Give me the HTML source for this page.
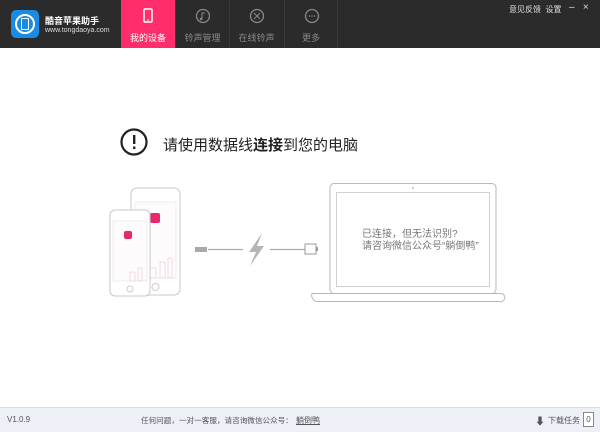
<!DOCTYPE html>
<html><head><meta charset="utf-8"><style>
*{margin:0;padding:0;box-sizing:border-box}
body{width:600px;height:432px;overflow:hidden;background:#fff;font-family:"Liberation Sans","Noto Sans CJK SC",sans-serif;position:relative}
.hdr{position:absolute;left:0;top:0;width:600px;height:48px;background:#2b2b2b}
.tab{position:absolute;top:0;height:48px;width:54px;color:#8a8a8a;font-size:9px;text-align:center;border-left:1px solid #3a3a3a}
.tab.on{background:#ff2d6a;color:#fff;border:none}
.tab span{position:absolute;left:0;right:0;top:31px}
.tab svg{position:absolute;left:19px;top:8px}
.ftr{position:absolute;left:0;top:407px;width:600px;height:25px;background:#eef0f8;border-top:1px solid #d8dbe6;font-size:8px;color:#555}
</style></head><body>
<div class="hdr">
 <div style="position:absolute;left:11px;top:10px;width:28px;height:28px;border-radius:5px;background:#1a8be0"><div style="position:absolute;left:4px;top:4px;width:20px;height:20px;border:2px solid #fff;border-radius:50%"></div><div style="position:absolute;left:10px;top:8px;width:8px;height:12px;border:1.5px solid #fff;border-radius:1px"></div></div>
 <div style="position:absolute;left:45px;top:14px;color:#fff;font-size:9px;font-weight:bold">酷音苹果助手</div>
 <div style="position:absolute;left:45px;top:27px;color:#ddd;font-size:7px">www.tongdaoya.com</div>
 <div class="tab on" style="left:121px"><svg width="16" height="16"><rect x="4" y="1" width="8" height="13" rx="1" fill="none" stroke="#fff" stroke-width="1.5"/><line x1="7" y1="12" x2="9" y2="12" stroke="#fff"/></svg><span>我的设备</span></div>
 <div class="tab" style="left:175px"><svg width="16" height="16"><circle cx="8" cy="8" r="6.5" fill="none" stroke="#888" stroke-width="1.3"/><path d="M7 11V5h3" stroke="#888" fill="none"/><circle cx="6" cy="11" r="1.3" fill="#888"/></svg><span>铃声管理</span></div>
 <div class="tab" style="left:229px"><svg width="16" height="16"><circle cx="8" cy="8" r="6.5" fill="none" stroke="#888" stroke-width="1.3"/><path d="M5 5l6 6M11 5l-6 6" stroke="#888"/></svg><span>在线铃声</span></div>
 <div class="tab" style="left:284px;border-right:1px solid #3a3a3a"><svg width="16" height="16"><circle cx="8" cy="8" r="6.5" fill="none" stroke="#888" stroke-width="1.3"/><circle cx="5.5" cy="8" r=".8" fill="#888"/><circle cx="8" cy="8" r=".8" fill="#888"/><circle cx="10.5" cy="8" r=".8" fill="#888"/></svg><span>更多</span></div>
 <div style="position:absolute;left:509px;top:4px;color:#ddd;font-size:8px">意见反馈&nbsp; 设置</div>
 <div style="position:absolute;left:569px;top:2px;color:#ddd;font-size:10px">–&nbsp;&nbsp; ×</div>
</div>
<svg style="position:absolute;left:0;top:0" width="600" height="432">
 <circle cx="134" cy="142" r="12.5" fill="none" stroke="#222" stroke-width="2.2"/>
 <rect x="133" y="135" width="2.4" height="9" fill="#222"/><rect x="133" y="146.5" width="2.4" height="2.5" fill="#222"/>
 <rect x="131" y="188" width="49" height="107" rx="6" fill="#fff" stroke="#c8c8c8"/>
 <rect x="135" y="202" width="41" height="76" fill="#fdfbfc" stroke="#ddd" stroke-width=".5"/>
 <circle cx="155.5" cy="287" r="3.5" fill="none" stroke="#ccc"/>
 <rect x="150" y="213" width="10" height="10" rx="2" fill="#e8286d"/>
 <path d="M150 268h6v10h-6zM160 262h5v16h-5zM168 258h4v20h-4z" fill="none" stroke="#f0c0d4" stroke-width=".6"/>
 <rect x="110" y="210" width="40" height="86" rx="5" fill="#fff" stroke="#c8c8c8"/>
 <rect x="113" y="221" width="34" height="60" fill="#fdfbfc" stroke="#ddd" stroke-width=".5"/>
 <circle cx="130" cy="289" r="3" fill="none" stroke="#ccc"/>
 <rect x="124" y="231" width="8" height="8" rx="2" fill="#e8286d"/>
 <path d="M130 272h5v9h-5zM138 268h4v13h-4z" fill="none" stroke="#f0c0d4" stroke-width=".6"/>
 <rect x="195" y="247" width="12" height="5" fill="#aaa"/><line x1="208" y1="249.5" x2="243" y2="249.5" stroke="#aaa" stroke-width="1.2"/>
 <path d="M262 233L249 252h7l-6 14 14-20h-7z" fill="#b5b5b5"/>
 <line x1="270" y1="249.5" x2="305" y2="249.5" stroke="#aaa" stroke-width="1.2"/>
 <rect x="305" y="244" width="11" height="10" fill="#fff" stroke="#999"/><rect x="316" y="247" width="2" height="4" fill="#999"/>
 <rect x="330" y="183.5" width="166" height="110" rx="4" fill="#fff" stroke="#b8b8b8"/>
 <rect x="336.5" y="192.5" width="153" height="94" fill="#fff" stroke="#d0d0d0"/>
 <circle cx="413" cy="188" r=".8" fill="#999"/>
 <path d="M312 293.5H502a3 3 0 0 1-3 8H318a6 6 0 0 1-6-8z" fill="#fff" stroke="#b8b8b8"/>
</svg>
<div style="position:absolute;left:163px;top:134px;font-size:15px;color:#222">请使用数据线<b>连接</b>到您的电脑</div>
<div style="position:absolute;left:362px;top:229px;font-size:10px;color:#777;line-height:12px">已连接，但无法识别?<br>请咨询微信公众号“躺倒鸭”</div>
<div class="ftr">
 <span style="position:absolute;left:7px;top:7px">V1.0.9</span>
 <span style="position:absolute;left:141px;top:7px;font-size:7.6px">任何问题，一对一客服，请咨询微信公众号：</span>
 <span style="position:absolute;left:296px;top:7px;text-decoration:underline">躺倒鸭</span>
 <span style="position:absolute;left:535px;top:5px;font-size:10px">⬇</span>
 <span style="position:absolute;left:548px;top:7px">下载任务</span>
 <span style="position:absolute;left:583px;top:4px;width:11px;height:15px;border:1px solid #888;background:#fff;text-align:center;line-height:13px">0</span>
</div>
</body></html>
